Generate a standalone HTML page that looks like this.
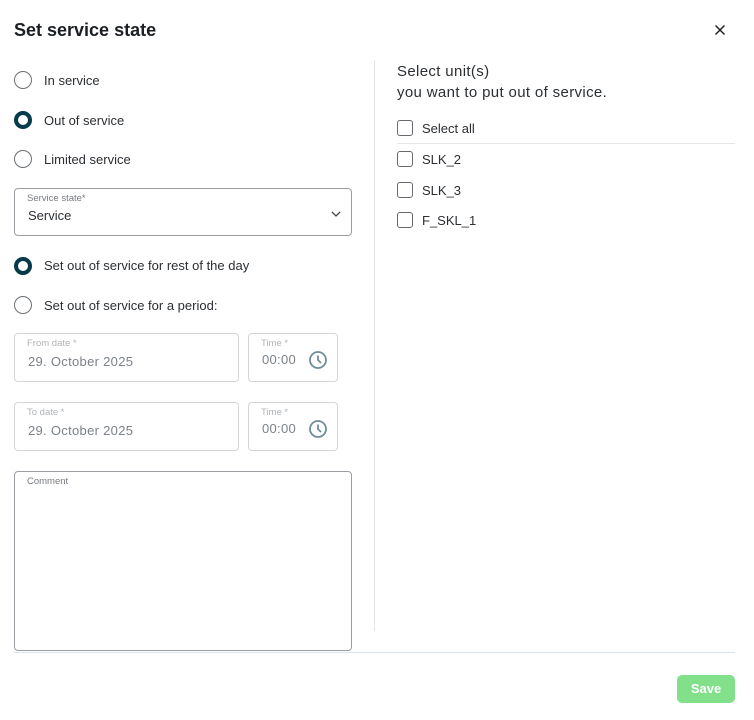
<!DOCTYPE html>
<html><head><style>
*{margin:0;padding:0;box-sizing:border-box}
body{width:754px;height:720px;background:#fff;font-family:"Liberation Sans",sans-serif;color:#1f2328;position:relative;overflow:hidden}
.a{position:absolute}
.t{font-size:13px;color:#2b2f33;line-height:16px}
.r{position:absolute;left:14px;width:18px;height:18px;border-radius:50%;border:1px solid #6b6f73}
.r.on{border:4px solid #073a4b}
.box{position:absolute;border:1px solid #d3d6d9;border-radius:4px}
.lbl{position:absolute;left:12px;top:4px;font-size:9.5px;color:#b0b4b8}
.val{position:absolute;left:13px;font-size:13px;color:#7b8289;letter-spacing:.3px}
.cb{position:absolute;left:397px;width:16px;height:16px;border:1px solid #66696d;border-radius:3px}
</style></head><body>
<div class="a" style="left:14px;top:20px;font-size:18px;font-weight:bold;color:#1b1f24">Set service state</div>
<svg class="a" style="left:715px;top:25px" width="10" height="10" viewBox="0 0 10 10"><path d="M0.5 0.5L9.5 9.5M9.5 0.5L0.5 9.5" stroke="#222" stroke-width="1.5"/></svg>

<div class="r" style="top:71px"></div><div class="a t" style="left:44px;top:73px">In service</div>
<div class="r on" style="top:111px"></div><div class="a t" style="left:44px;top:113px">Out of service</div>
<div class="r" style="top:150px"></div><div class="a t" style="left:44px;top:152px">Limited service</div>

<div class="box" style="left:14px;top:188px;width:338px;height:48px;border-color:#9a9ea2">
<div class="lbl" style="color:#777b80">Service state*</div>
<div class="a" style="left:13px;top:19px;font-size:13px;color:#2b2f33">Service</div>
<svg class="a" style="left:316px;top:22px" width="10" height="6" viewBox="0 0 10 6"><path d="M1 1L5 5L9 1" stroke="#444" stroke-width="1.3" fill="none"/></svg>
</div>

<div class="r on" style="top:257px"></div><div class="a t" style="left:44px;top:258px">Set out of service for rest of the day</div>
<div class="r" style="top:296px"></div><div class="a t" style="left:44px;top:298px">Set out of service for a period:</div>

<div class="box" style="left:14px;top:333px;width:225px;height:49px"><div class="lbl">From date *</div><div class="val" style="top:20px">29. October 2025</div></div>
<div class="box" style="left:248px;top:333px;width:90px;height:49px"><div class="lbl">Time *</div><div class="val" style="top:18px">00:00</div>
<svg class="a" style="left:59px;top:16px" width="20" height="20" viewBox="0 0 20 20"><circle cx="10" cy="10" r="8" stroke="#6f8e99" stroke-width="1.8" fill="none"/><path d="M10 5.5V10L13 13" stroke="#6f8e99" stroke-width="1.8" fill="none"/></svg></div>

<div class="box" style="left:14px;top:402px;width:225px;height:49px"><div class="lbl">To date *</div><div class="val" style="top:20px">29. October 2025</div></div>
<div class="box" style="left:248px;top:402px;width:90px;height:49px"><div class="lbl">Time *</div><div class="val" style="top:18px">00:00</div>
<svg class="a" style="left:59px;top:16px" width="20" height="20" viewBox="0 0 20 20"><circle cx="10" cy="10" r="8" stroke="#6f8e99" stroke-width="1.8" fill="none"/><path d="M10 5.5V10L13 13" stroke="#6f8e99" stroke-width="1.8" fill="none"/></svg></div>

<div class="box" style="left:14px;top:471px;width:338px;height:180px;border-color:#9a9ea2"><div class="lbl" style="color:#777b80">Comment</div></div>

<div class="a" style="left:374px;top:60px;width:1px;height:571px;background:#e3e5e7"></div>

<div class="a" style="left:397px;top:61px;font-size:15px;line-height:21px;color:#2b2f33;letter-spacing:.35px">Select unit(s)<br>you want to put out of service.</div>
<div class="cb" style="top:120px"></div><div class="a t" style="left:422px;top:121px">Select all</div>
<div class="a" style="left:397px;top:143px;width:338px;height:1px;background:#e3e7ea"></div>
<div class="cb" style="top:151px"></div><div class="a t" style="left:422px;top:152px">SLK_2</div>
<div class="cb" style="top:182px"></div><div class="a t" style="left:422px;top:183px">SLK_3</div>
<div class="cb" style="top:212px"></div><div class="a t" style="left:422px;top:213px">F_SKL_1</div>

<div class="a" style="left:14px;top:652px;width:721px;height:1px;background:#d6e4ee"></div>
<div class="a" style="left:677px;top:675px;width:58px;height:28px;background:#82e08a;border-radius:5px;color:#fff;font-weight:bold;font-size:13px;text-align:center;line-height:28px">Save</div>
</body></html>
